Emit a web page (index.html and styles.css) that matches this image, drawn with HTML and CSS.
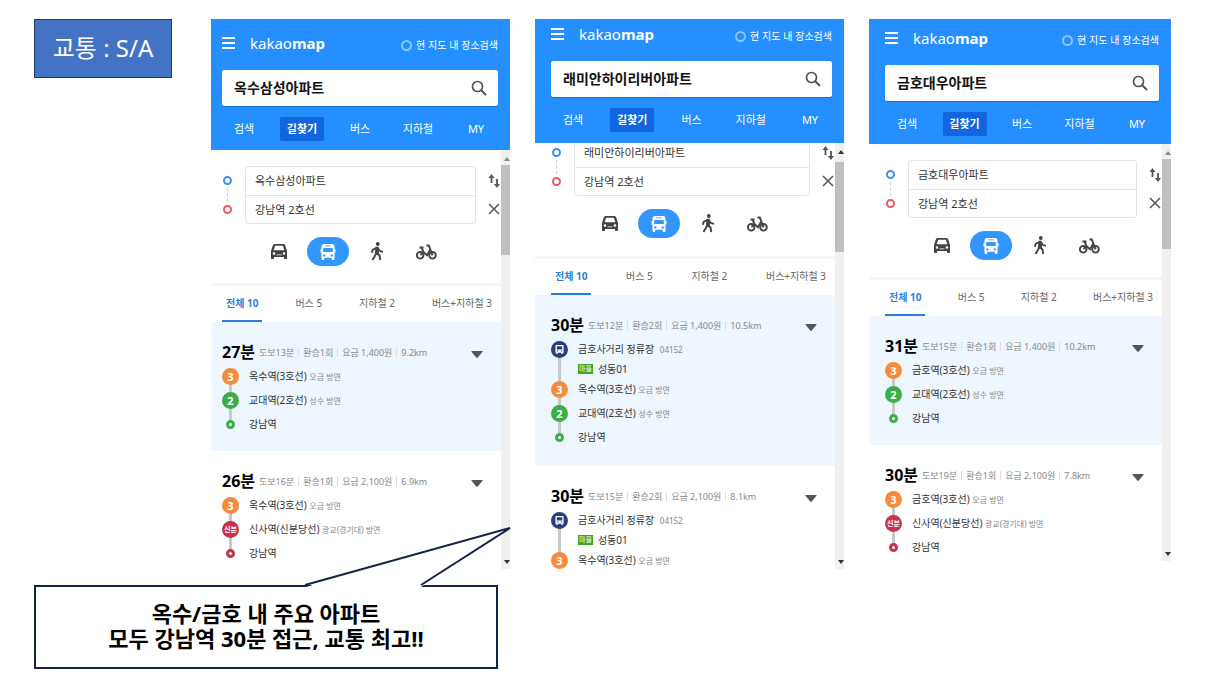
FILE: index.html
```html
<!DOCTYPE html>
<html lang="ko">
<head>
<meta charset="utf-8">
<meta name="viewport" content="width=device-width, initial-scale=1">
<title>교통 : S/A</title>
<link rel="stylesheet" href="styles.css">
</head>
<body>
<svg class="sprite" aria-hidden="true">
  <symbol id="menu" viewBox="0 0 13 12"><path d="M0 1h13M0 6h13M0 11h13" fill="none" stroke="currentColor" stroke-width="1.8"/></symbol>
  <symbol id="search" viewBox="0 0 16 16"><circle cx="6.5" cy="6.5" r="5" fill="none" stroke="currentColor" stroke-width="1.7"/><path d="M10.2 10.2 15 15" stroke="currentColor" stroke-width="2"/></symbol>
  <symbol id="swap" viewBox="0 0 12 16"><path d="M3.5 10V3M9 6v7" fill="none" stroke="currentColor" stroke-width="1.8"/><path d="M.5 5 3.5 1l3 4zM6 11l3 4 3-4z" fill="currentColor"/></symbol>
  <symbol id="close" viewBox="0 0 12 12"><path d="M1 1l10 10M11 1 1 11" stroke="currentColor" stroke-width="1.5"/></symbol>
  <symbol id="car" viewBox="0 0 16 15"><path fill="currentColor" fill-rule="evenodd" d="M4 0h8c1.200 0 1.800.5 2.200 1.500L16 7v7.300q0 .7-.7.7h-1.600q-.7 0-.7-.7V13H3v1.300q0 .7-.7.7H.7q-.7 0-.7-.7V7l1.800-5.500C2.200.5 2.800 0 4 0zM4.200 1.700 2.600 6.300h10.800l-1.600-4.600zM3 8.200a1.300 1.300 0 100 2.600 1.300 1.300 0 000-2.600zM13 8.200a1.300 1.300 0 100 2.600 1.300 1.300 0 000-2.600zM5.500 10.500v.8h5v-.8z"/></symbol>
  <symbol id="bus" viewBox="0 0 16 16"><path fill="currentColor" fill-rule="evenodd" d="M4 0h8q2.500 0 2.500 2.500V5h1v3.500h-1v6.300q0 1.200-1 1.200h-.8q-1 0-1-1.200V13.800H4.300v1q0 1.200-1 1.200h-.8q-1 0-1-1.200V8.500h-1V5h1V2.500Q1.500 0 4 0zM5 1.400v.9h6v-.9zM3.200 4v4h9.600V4zM4.300 10.200a1.200 1.200 0 100 2.400 1.200 1.200 0 000-2.400zM11.700 10.200a1.200 1.200 0 100 2.400 1.200 1.200 0 000-2.400z"/></symbol>
  <symbol id="walk" viewBox="0 0 14 19"><circle cx="7.800" cy="2" r="1.900" fill="currentColor"/><path d="M7 5.500 6.200 11.500M6.500 6 2.800 7.600 1.800 10.800M8 6.200l1.500 2.600 3.500 1M6.300 11 4.700 14.300 2.500 18M7 11l2.600 2.800.6 4.200" fill="none" stroke="currentColor" stroke-width="1.900"/><path d="M5.500 4.800h3.200l.3 7H5z" fill="currentColor"/></symbol>
  <symbol id="bike" viewBox="0 0 21 16"><g fill="none" stroke="currentColor" stroke-width="1.900"><circle cx="4.200" cy="11.300" r="3.300"/><circle cx="16.500" cy="11.300" r="3.300"/><path d="M3.500 3.500h4M5.500 3.500 7.500 8M4.500 11l3-3 3.500 3.300L14 6M10.500 1.500h2.300L16.500 11.300"/></g></symbol>
  <symbol id="stop" viewBox="0 0 10 10"><path fill="currentColor" fill-rule="evenodd" d="M1.500 0h7Q9.500 0 9.500 1v7.500h-1V10H7V8.500H3V10H1.500V8.500h-1V1Q.5 0 1.500 0zM2 1.500V5h6V1.500zM2 6.200v1h1.500v-1zM6.500 6.200v1H8v-1z"/></symbol>
  <symbol id="up" viewBox="0 0 6 4"><path d="M0 4 3 0l3 4z" fill="currentColor"/></symbol>
  <symbol id="down" viewBox="0 0 12 7"><path d="M1 0h10q1 0 .5.800L7 6.300q-1 1-2 0L.5.800Q0 0 1 0z" fill="currentColor"/></symbol>
</svg>

<main class="slide">
  <h1 class="grade">교통 : S/A</h1>

  <section class="panel panel--oksu">
    <header class="header">
      <div class="brand-row">
        <button class="icon-button" type="button" aria-label="메뉴"><svg class="menu-icon"><use href="#menu"/></svg></button>
        <a class="brand" href="#">kakao<b>map</b></a>
        <label class="in-view"><input type="checkbox">현 지도 내 장소검색</label>
      </div>
      <div class="search">
        <input type="text" aria-label="장소 검색" value="옥수삼성아파트">
        <button class="icon-button" type="button" aria-label="검색"><svg class="search-icon"><use href="#search"/></svg></button>
      </div>
      <nav class="menu">
        <a href="#">검색</a><a class="is-active" href="#">길찾기</a><a href="#">버스</a><a href="#">지하철</a><a href="#">MY</a>
      </nav>
    </header>
    <div class="body">
      <div class="content">
        <div class="route-form">
          <div class="ends"><i class="ring ring--start"></i><i class="dots"></i><i class="ring ring--end"></i></div>
          <div class="fields">
            <input type="text" aria-label="출발지" value="옥수삼성아파트">
            <input type="text" aria-label="도착지" value="강남역 2호선">
          </div>
          <div class="form-actions">
            <button class="icon-button" type="button" aria-label="출발 도착 바꾸기"><svg class="swap-icon"><use href="#swap"/></svg></button>
            <button class="icon-button" type="button" aria-label="지우기"><svg class="close-icon"><use href="#close"/></svg></button>
          </div>
        </div>
        <div class="modes">
          <button type="button" aria-label="자동차"><svg class="car-icon"><use href="#car"/></svg></button>
          <button class="is-active" type="button" aria-label="대중교통"><svg class="bus-icon"><use href="#bus"/></svg></button>
          <button type="button" aria-label="도보"><svg class="walk-icon"><use href="#walk"/></svg></button>
          <button type="button" aria-label="자전거"><svg class="bike-icon"><use href="#bike"/></svg></button>
        </div>
        <div class="tabs">
          <button class="is-active" type="button">전체 10</button><button type="button">버스 5</button><button type="button">지하철 2</button><button type="button">버스+지하철 3</button>
        </div>
        <article class="result is-selected">
          <div class="summary"><strong>27분</strong><span>도보13분</span><span>환승1회</span><span>요금 1,400원</span><span>9.2km</span><button class="icon-button toggle" type="button" aria-label="펼치기"><svg class="toggle-icon"><use href="#down"/></svg></button></div>
          <ol class="stops">
            <li><i class="badge line-3">3</i><p>옥수역(3호선) <small>오금 방면</small></p></li>
            <li><i class="badge line-2">2</i><p>교대역(2호선) <small>성수 방면</small></p></li>
            <li><i class="goal goal--green"></i><p>강남역</p></li>
          </ol>
        </article>
        <article class="result">
          <div class="summary"><strong>26분</strong><span>도보16분</span><span>환승1회</span><span>요금 2,100원</span><span>6.9km</span><button class="icon-button toggle" type="button" aria-label="펼치기"><svg class="toggle-icon"><use href="#down"/></svg></button></div>
          <ol class="stops">
            <li><i class="badge line-3">3</i><p>옥수역(3호선) <small>오금 방면</small></p></li>
            <li><i class="badge line-sb">신분</i><p>신사역(신분당선) <small>광교(경기대) 방면</small></p></li>
            <li><i class="goal goal--red"></i><p>강남역</p></li>
          </ol>
        </article>
      </div>
      <div class="scrollbar"><svg class="arrow-up"><use href="#up"/></svg><i class="thumb"></i><svg class="arrow-down"><use href="#up"/></svg></div>
    </div>
  </section>

  <section class="panel panel--riverapt">
    <header class="header">
      <div class="brand-row">
        <button class="icon-button" type="button" aria-label="메뉴"><svg class="menu-icon"><use href="#menu"/></svg></button>
        <a class="brand" href="#">kakao<b>map</b></a>
        <label class="in-view"><input type="checkbox">현 지도 내 장소검색</label>
      </div>
      <div class="search">
        <input type="text" aria-label="장소 검색" value="래미안하이리버아파트">
        <button class="icon-button" type="button" aria-label="검색"><svg class="search-icon"><use href="#search"/></svg></button>
      </div>
      <nav class="menu">
        <a href="#">검색</a><a class="is-active" href="#">길찾기</a><a href="#">버스</a><a href="#">지하철</a><a href="#">MY</a>
      </nav>
    </header>
    <div class="body">
      <div class="content">
        <div class="route-form">
          <div class="ends"><i class="ring ring--start"></i><i class="dots"></i><i class="ring ring--end"></i></div>
          <div class="fields">
            <input type="text" aria-label="출발지" value="래미안하이리버아파트">
            <input type="text" aria-label="도착지" value="강남역 2호선">
          </div>
          <div class="form-actions">
            <button class="icon-button" type="button" aria-label="출발 도착 바꾸기"><svg class="swap-icon"><use href="#swap"/></svg></button>
            <button class="icon-button" type="button" aria-label="지우기"><svg class="close-icon"><use href="#close"/></svg></button>
          </div>
        </div>
        <div class="modes">
          <button type="button" aria-label="자동차"><svg class="car-icon"><use href="#car"/></svg></button>
          <button class="is-active" type="button" aria-label="대중교통"><svg class="bus-icon"><use href="#bus"/></svg></button>
          <button type="button" aria-label="도보"><svg class="walk-icon"><use href="#walk"/></svg></button>
          <button type="button" aria-label="자전거"><svg class="bike-icon"><use href="#bike"/></svg></button>
        </div>
        <div class="tabs">
          <button class="is-active" type="button">전체 10</button><button type="button">버스 5</button><button type="button">지하철 2</button><button type="button">버스+지하철 3</button>
        </div>
        <article class="result is-selected">
          <div class="summary"><strong>30분</strong><span>도보12분</span><span>환승2회</span><span>요금 1,400원</span><span>10.5km</span><button class="icon-button toggle" type="button" aria-label="펼치기"><svg class="toggle-icon"><use href="#down"/></svg></button></div>
          <ol class="stops">
            <li><i class="badge bus-stop"><svg class="stop-icon"><use href="#stop"/></svg></i><p>금호사거리 정류장 <small class="stop-number">04152</small></p><p class="bus-name"><em>마을</em>성동01</p></li>
            <li><i class="badge line-3">3</i><p>옥수역(3호선) <small>오금 방면</small></p></li>
            <li><i class="badge line-2">2</i><p>교대역(2호선) <small>성수 방면</small></p></li>
            <li><i class="goal goal--green"></i><p>강남역</p></li>
          </ol>
        </article>
        <article class="result">
          <div class="summary"><strong>30분</strong><span>도보15분</span><span>환승2회</span><span>요금 2,100원</span><span>8.1km</span><button class="icon-button toggle" type="button" aria-label="펼치기"><svg class="toggle-icon"><use href="#down"/></svg></button></div>
          <ol class="stops">
            <li><i class="badge bus-stop"><svg class="stop-icon"><use href="#stop"/></svg></i><p>금호사거리 정류장 <small class="stop-number">04152</small></p><p class="bus-name"><em>마을</em>성동01</p></li>
            <li><i class="badge line-3">3</i><p>옥수역(3호선) <small>오금 방면</small></p></li>
          </ol>
        </article>
      </div>
      <div class="scrollbar"><svg class="arrow-up"><use href="#up"/></svg><i class="thumb"></i><svg class="arrow-down"><use href="#up"/></svg></div>
    </div>
  </section>

  <section class="panel panel--geumho">
    <header class="header">
      <div class="brand-row">
        <button class="icon-button" type="button" aria-label="메뉴"><svg class="menu-icon"><use href="#menu"/></svg></button>
        <a class="brand" href="#">kakao<b>map</b></a>
        <label class="in-view"><input type="checkbox">현 지도 내 장소검색</label>
      </div>
      <div class="search">
        <input type="text" aria-label="장소 검색" value="금호대우아파트">
        <button class="icon-button" type="button" aria-label="검색"><svg class="search-icon"><use href="#search"/></svg></button>
      </div>
      <nav class="menu">
        <a href="#">검색</a><a class="is-active" href="#">길찾기</a><a href="#">버스</a><a href="#">지하철</a><a href="#">MY</a>
      </nav>
    </header>
    <div class="body">
      <div class="content">
        <div class="route-form">
          <div class="ends"><i class="ring ring--start"></i><i class="dots"></i><i class="ring ring--end"></i></div>
          <div class="fields">
            <input type="text" aria-label="출발지" value="금호대우아파트">
            <input type="text" aria-label="도착지" value="강남역 2호선">
          </div>
          <div class="form-actions">
            <button class="icon-button" type="button" aria-label="출발 도착 바꾸기"><svg class="swap-icon"><use href="#swap"/></svg></button>
            <button class="icon-button" type="button" aria-label="지우기"><svg class="close-icon"><use href="#close"/></svg></button>
          </div>
        </div>
        <div class="modes">
          <button type="button" aria-label="자동차"><svg class="car-icon"><use href="#car"/></svg></button>
          <button class="is-active" type="button" aria-label="대중교통"><svg class="bus-icon"><use href="#bus"/></svg></button>
          <button type="button" aria-label="도보"><svg class="walk-icon"><use href="#walk"/></svg></button>
          <button type="button" aria-label="자전거"><svg class="bike-icon"><use href="#bike"/></svg></button>
        </div>
        <div class="tabs">
          <button class="is-active" type="button">전체 10</button><button type="button">버스 5</button><button type="button">지하철 2</button><button type="button">버스+지하철 3</button>
        </div>
        <article class="result is-selected">
          <div class="summary"><strong>31분</strong><span>도보15분</span><span>환승1회</span><span>요금 1,400원</span><span>10.2km</span><button class="icon-button toggle" type="button" aria-label="펼치기"><svg class="toggle-icon"><use href="#down"/></svg></button></div>
          <ol class="stops">
            <li><i class="badge line-3">3</i><p>금호역(3호선) <small>오금 방면</small></p></li>
            <li><i class="badge line-2">2</i><p>교대역(2호선) <small>성수 방면</small></p></li>
            <li><i class="goal goal--green"></i><p>강남역</p></li>
          </ol>
        </article>
        <article class="result">
          <div class="summary"><strong>30분</strong><span>도보19분</span><span>환승1회</span><span>요금 2,100원</span><span>7.8km</span><button class="icon-button toggle" type="button" aria-label="펼치기"><svg class="toggle-icon"><use href="#down"/></svg></button></div>
          <ol class="stops">
            <li><i class="badge line-3">3</i><p>금호역(3호선) <small>오금 방면</small></p></li>
            <li><i class="badge line-sb">신분</i><p>신사역(신분당선) <small>광교(경기대) 방면</small></p></li>
            <li><i class="goal goal--red"></i><p>강남역</p></li>
          </ol>
        </article>
      </div>
      <div class="scrollbar"><svg class="arrow-up"><use href="#up"/></svg><i class="thumb"></i><svg class="arrow-down"><use href="#up"/></svg></div>
    </div>
  </section>

  <aside class="callout">
    <svg class="callout-tail" viewBox="0 0 208 60" aria-hidden="true"><path d="M2 60 206 1 117 60z" fill="#fff"/><path d="M1 58 206 1 117 58" fill="none" stroke="#14234a" stroke-width="2"/></svg>
    <p>옥수/금호 내 주요 아파트<br>모두 강남역 30분 접근, 교통 최고!!</p>
  </aside>
</main>
</body>
</html>
```

FILE: styles.css
```css
* { box-sizing: border-box; }

body {
  margin: 0;
  background: #fff;
  color: #333;
  font-family: "Noto Sans", "Noto Sans CJK KR", sans-serif;
  font-size: 10px;
}

h1, p, ol { margin: 0; padding: 0; }
ol { list-style: none; }
i, em { font-style: normal; }
a { color: inherit; text-decoration: none; }
svg { display: block; flex: none; }
input, button { font: inherit; color: inherit; }
input[type="text"] {
  width: 100%;
  min-width: 0;
  border: 0;
  padding: 0;
  background: none;
  outline: 0;
}
button { margin: 0; border: 0; padding: 0; background: none; }

.sprite { position: absolute; width: 0; height: 0; }
.icon-button { display: flex; align-items: center; justify-content: center; }

.slide {
  display: grid;
  grid-template-columns: 152fr 299fr 309fr 302fr;
  column-gap: 25px;
  align-items: start;
  padding: 19px 45px 15px 34px;
}

.grade {
  margin-right: 14px;
  border: 1px solid #223a66;
  padding: 10px 0 11px;
  background: #4472c4;
  color: #fff;
  font-size: 24px;
  font-weight: 400;
  line-height: 36px;
  text-align: center;
  white-space: nowrap;
}

/* Map panels */
.panel {
  display: flex;
  flex-direction: column;
  height: 550px;
  min-width: 0;
  overflow: hidden;
  background: #fff;
  white-space: nowrap;
}
.panel--oksu { --edge: 11px; --head-top: 12px; --head-bottom: 9px; --form-top: 16px; --bar-top: 15px; --arrow: #888; }
.panel--riverapt { --edge: 16px; --head-top: 3px; --head-bottom: 11px; --form-top: -5px; --bar-top: 19px; --arrow: #333; }
.panel--geumho { --edge: 16px; --head-top: 7px; --head-bottom: 8px; --form-top: 16px; --bar-top: 15px; --arrow: #888; height: 542px; }

.header {
  padding: var(--head-top) 12px var(--head-bottom) var(--edge);
  background: #258fff;
  color: #fff;
}
.brand-row { display: flex; align-items: center; height: 24px; margin-bottom: 15px; }
.menu-icon { width: 13px; height: 12px; }
.brand { margin-left: 15px; font-size: 15px; line-height: 24px; }
.brand b { font-weight: 700; }
.in-view { display: flex; align-items: center; gap: 4px; margin-left: auto; padding-top: 4px; font-family: "Noto Sans CJK KR", sans-serif; line-height: 12px; }
.in-view input {
  appearance: none;
  width: 11px;
  height: 11px;
  margin: 0;
  border: 2px solid #8cc6ff;
  border-radius: 50%;
}
.search {
  display: flex;
  align-items: center;
  height: 36px;
  border-radius: 2px;
  padding: 0 11px 0 12px;
  background: #fff;
  box-shadow: 0 1px 1px #1b70cc;
  color: #111;
  font-size: 14px;
  font-weight: 700;
}
.search input { padding-bottom: 3px; }
.search-icon { width: 16px; height: 16px; color: #555; }
.menu { display: flex; justify-content: space-between; margin-top: 11px; font-size: 11px; }
.menu a { width: 44px; border-radius: 2px; line-height: 24px; text-align: center; }
.menu .is-active { background: #1166df; font-weight: 700; }

.body { display: flex; flex: 1; min-height: 0; overflow: hidden; }
.content { flex: 1; min-width: 0; }

.route-form {
  display: grid;
  grid-template-columns: 11px 1fr 12px;
  column-gap: 12px;
  margin-top: var(--form-top);
  padding: 0 1px 0 var(--edge);
}
.ends, .form-actions { display: flex; flex-direction: column; align-items: center; justify-content: space-between; }
.ends { padding: 10px 0; }
.ring { width: 9px; height: 9px; border: 2px solid; border-radius: 50%; }
.ring--start { border-color: #3b8fee; }
.ring--end { border-color: #e85a62; }
.dots { height: 14px; border-left: 1px dashed #ccc; }
.form-actions { padding: 7px 0; color: #555; }
.swap-icon { width: 12px; height: 16px; }
.close-icon { width: 12px; height: 16px; }
.fields { border: 1px solid #e4e4e4; border-radius: 3px; font-size: 11px; }
.fields input { display: block; height: 28px; padding: 0 9px 2px; }
.fields input + input { border-top: 1px solid #e4e4e4; }

.modes { display: flex; gap: 7px; padding: 13px 0 17px calc(var(--edge) + 36px); color: #444; }
.modes button {
  display: flex;
  align-items: center;
  justify-content: center;
  width: 42px;
  height: 29px;
  border-radius: 15px;
}
.modes .is-active { background: #3396ff; color: #fff; }
.car-icon { width: 16px; height: 15px; }
.bus-icon { width: 16px; height: 16px; }
.walk-icon { width: 14px; height: 19px; }
.bike-icon { width: 21px; height: 16px; }

.tabs {
  display: flex;
  justify-content: space-between;
  border-top: 3px solid #f4f4f4;
  padding: 0 5px 0 var(--edge);
  color: #666;
}
.tabs button { height: 36px; border-bottom: 2px solid transparent; padding: 0 4px 2px; }
.tabs .is-active { border-color: #2a7fdd; color: #2a7fdd; font-weight: 700; }

.result { padding: 20px 18px 15px var(--edge); }
.is-selected.result { background: #eef6ff; }
.summary { display: flex; align-items: center; height: 20px; margin-bottom: 2px; color: #888; font-size: 9px; }
.summary strong { margin-right: 4px; color: #000; font-size: 16px; line-height: 20px; }
.summary span + span { margin-left: 4px; border-left: 1px solid #ddd; padding-left: 4px; line-height: 9px; }
.toggle { margin-left: auto; padding-top: 4px; }
.toggle-icon { width: 12px; height: 7px; color: #555; }

.stops li {
  position: relative;
  display: grid;
  grid-template-columns: 17px 1fr;
  grid-template-rows: 24px;
  grid-auto-rows: 16px;
  column-gap: 10px;
  align-items: center;
  justify-items: center;
}
.stops p { justify-self: start; line-height: 20px; }
.stops small { color: #888; font-size: 8px; line-height: 8px; }
.stops .stop-number { margin-left: 3px; }
/* Grey line joining each marker to the next */
.stops li:not(:last-child)::before {
  content: "";
  position: absolute;
  top: 12px;
  left: 7px;
  width: 3px;
  height: 100%;
  background: #c6c8ca;
}
.badge, .goal { position: relative; z-index: 1; border-radius: 50%; }
.badge {
  display: flex;
  align-items: center;
  justify-content: center;
  width: 17px;
  height: 17px;
  color: #fff;
  font-size: 11px;
  font-weight: 700;
  line-height: 17px;
}
.line-3 { background: #f68b3c; }
.line-2 { background: #3bae49; }
.line-sb { background: #c9304a; font-size: 7px; }
.bus-stop { background: #2c3e7d; }
.stop-icon { width: 9px; height: 9px; }
.goal { width: 9px; height: 9px; border: 3px solid; background: #fff; }
.goal--green { border-color: #3bae49; }
.goal--red { border-color: #c9304a; }
.stops .bus-name { display: flex; grid-column: 2; align-items: center; gap: 5px; line-height: 16px; }
.bus-name em { padding: 0 1px; background: #3ea91d; color: #fff; font-size: 7px; line-height: 10px; }

/* The taller layout of the middle panel */
.panel--riverapt .modes { padding-left: calc(var(--edge) + 38px); padding-bottom: 18px; }
.panel--riverapt .result { padding-bottom: 17px; }

.scrollbar { display: flex; flex-direction: column; align-items: flex-end; width: 9px; background: #f0f0f0; }
.arrow-up, .arrow-down { width: 6px; height: 4px; }
.arrow-up { margin: 7px 0 calc(var(--bar-top) - 11px); color: var(--arrow); }
.thumb { width: 100%; height: 90px; background: #bfbfbf; }
.arrow-down { margin: auto 0 5px; color: #333; transform: rotate(180deg); }

/* Speech callout under the first panel */
.callout {
  position: relative;
  grid-column: 1 / span 2;
  margin: 16px 12px 0 0;
  border: 2px solid #14234a;
  padding: 14px 0 16px;
  background: #fff;
  color: #000;
  font-size: 22px;
  font-weight: 700;
  line-height: 25px;
  text-align: center;
}
.callout-tail { position: absolute; top: -60px; left: 268px; width: 208px; height: 60px; }
```
